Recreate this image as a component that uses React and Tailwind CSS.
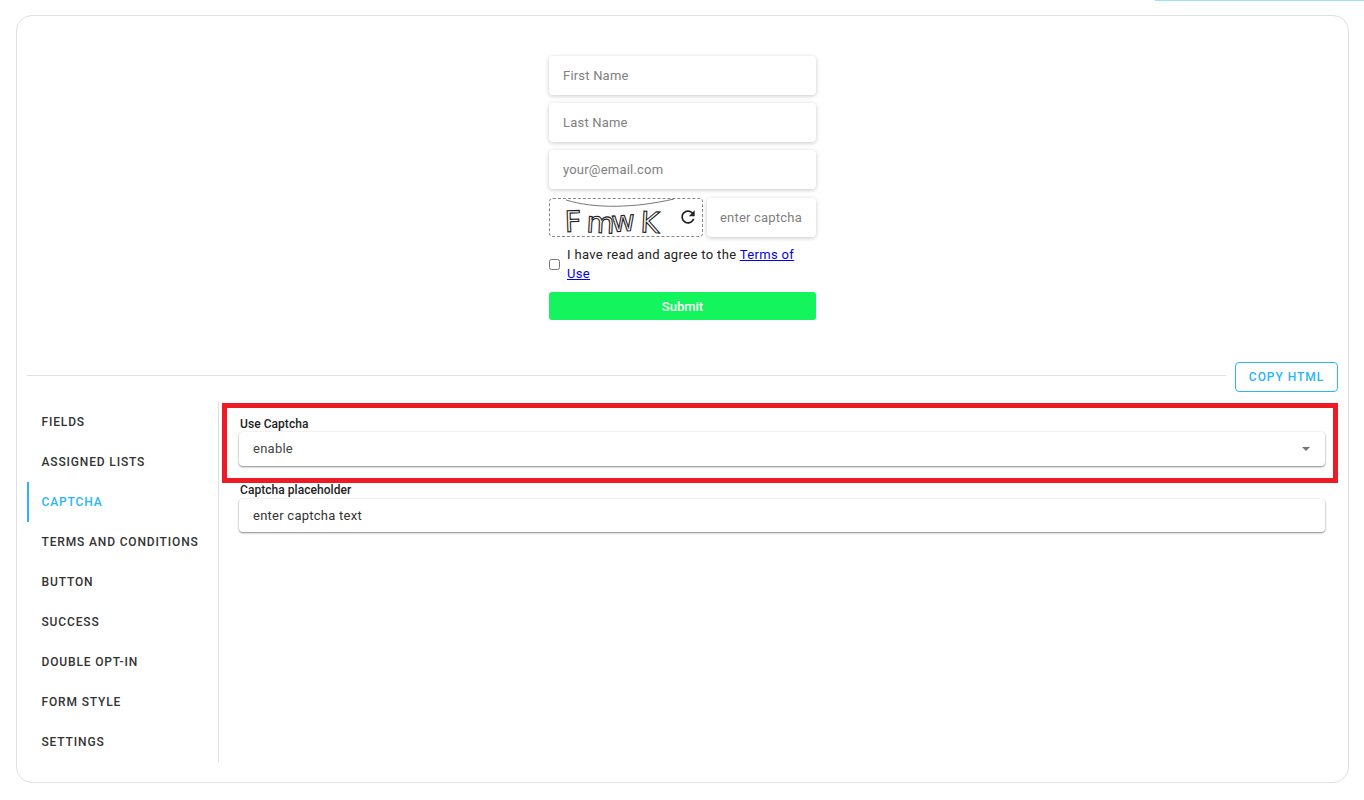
import { useState } from 'react'

const TABS = [
  'Fields',
  'Assigned Lists',
  'Captcha',
  'Terms and Conditions',
  'Button',
  'Success',
  'Double Opt-In',
  'Form Style',
  'Settings',
]

function FormInput({ placeholder }) {
  return (
    <input
      placeholder={placeholder}
      className="h-[39px] w-full rounded-[4px] bg-white px-3.5 text-[13px] tracking-[0.2px] text-[#333] placeholder-[#808080] shadow-[0_1px_4px_rgba(0,0,0,0.22)] outline-none"
    />
  )
}

function Captcha() {
  return (
    <div className="relative h-[39px] w-[154px] shrink-0 rounded-[4px] border border-dashed border-[#888]">
      <svg width="132" height="46" viewBox="0 0 132 46" className="block overflow-visible">
        <path d="M16 1 C 45 10, 85 9, 124 0" fill="none" stroke="#777" strokeWidth="1" />
        <text
          x="15 36 62 90"
          y="33"
          rotate="-2 3 -4 3"
          fill="#fff"
          stroke="#222"
          strokeWidth="1.1"
          fontFamily="'DejaVu Sans', sans-serif"
          fontSize="29"
        >
          FmwK
        </text>
      </svg>
      <svg width="20" height="20" viewBox="0 0 24 24" className="absolute top-[8px] left-[128px]">
        <path
          fill="#222"
          d="M17.65 6.35C16.2 4.9 14.21 4 12 4c-4.42 0-7.99 3.58-7.99 8s3.57 8 7.99 8c3.73 0 6.84-2.55 7.73-6h-2.08c-.82 2.33-3.04 4-5.65 4-3.31 0-6-2.69-6-6s2.69-6 6-6c1.66 0 3.14.69 4.22 1.78L13 11h7V4l-2.35 2.35z"
        />
      </svg>
    </div>
  )
}

function Field({ label, children }) {
  return (
    <div>
      <div className="pl-px text-[12px] leading-[14px] font-medium tracking-[0.05px] text-[#222]">{label}</div>
      {children}
    </div>
  )
}

export default function App() {
  const [active, setActive] = useState('Captcha')

  return (
    <div className="relative h-[800px] overflow-hidden bg-white font-['Roboto',sans-serif]">
      {/* cut off tab indicator at the very top */}
      <div className="absolute top-0 right-0 h-px w-[209px] bg-[#9be4fb]" />

      <div className="mx-4 mt-[15px] h-[768px] w-[1333px] rounded-[16px] border border-[#e0e0e0] px-[10px] pt-10">
        <div className="mx-auto flex w-[267px] flex-col">
          <div className="flex flex-col gap-2">
            <FormInput placeholder="First Name" />
            <FormInput placeholder="Last Name" />
            <FormInput placeholder="your@email.com" />
          </div>
          <div className="mt-[9px] flex gap-1">
            <Captcha />
            <input
              placeholder="enter captcha"
              className="h-[39px] w-[109px] rounded-[4px] bg-white px-[13px] text-[13px] tracking-[0.2px] placeholder-[#808080] shadow-[0_1px_4px_rgba(0,0,0,0.22)] outline-none"
            />
          </div>
          <label className="mt-2 flex items-center gap-[7px] text-[13px] leading-[19px] tracking-[0.35px] text-[#222]">
            <input type="checkbox" className="h-[11px] w-[11px] shrink-0 appearance-auto" />
            <span>
              I have read and agree to the{' '}
              <a href="#terms" className="text-[#0000ee] underline">Terms of Use</a>
            </span>
          </label>
          <button className="mt-[9px] h-7 rounded-[3px] bg-[#14f45d] pt-px text-[13px] font-medium text-white">
            Submit
          </button>
        </div>

        <div className="mt-[42px] flex items-center gap-[9px]">
          <div className="mb-1 h-px flex-1 bg-[#e0e0e0]" />
          <button className="h-[30px] w-[103px] rounded-[4px] border border-[#29b6f6] text-[12px] font-medium tracking-[0.95px] text-[#29b6f6]">
            COPY HTML
          </button>
        </div>

        <div className="mt-[10px] flex h-[360px]">
          <div className="w-[192px] shrink-0 border-r border-[#e0e0e0]">
            {TABS.map(tab => (
              <button
                key={tab}
                onClick={() => setActive(tab)}
                className={
                  'block h-10 w-full border-l-2 pl-[12.5px] text-left text-[12px] font-medium tracking-[0.85px] uppercase ' +
                  (active === tab ? 'border-[#29b6f6] text-[#29b6f6]' : 'border-transparent text-[#333]')
                }
              >
                {tab}
              </button>
            ))}
          </div>

          <div className="flex-1 pt-[15px] pr-[13px] pl-5">
            <Field label="Use Captcha">
              <div className="mt-[1px] flex h-[34px] items-center justify-between rounded-[4px] bg-white pr-[15px] pl-3.5 text-[13px] tracking-[0.25px] text-[#444] shadow-[0_1px_2px_rgba(0,0,0,0.45),0_0_3px_rgba(0,0,0,0.08)]">
                <span>enable</span>
                <span className="h-0 w-0 border-x-[4.5px] border-t-[4.5px] border-x-transparent border-t-[#757575]" />
              </div>
            </Field>
            <div className="mt-[17px]">
              <Field label="Captcha placeholder">
                <input
                  defaultValue="enter captcha text"
                  className="mt-[2px] block h-[33px] w-full rounded-[4px] bg-white px-3.5 text-[13px] tracking-[0.25px] text-[#333] shadow-[0_1px_2px_rgba(0,0,0,0.45),0_0_3px_rgba(0,0,0,0.08)] outline-none"
                />
              </Field>
            </div>
          </div>
        </div>
      </div>

      {/* red annotation box drawn over the screenshot */}
      <div className="pointer-events-none absolute top-[403px] left-[222px] h-[80px] w-[1116px] border-[5px] border-[#ed1c24]" />
    </div>
  )
}
